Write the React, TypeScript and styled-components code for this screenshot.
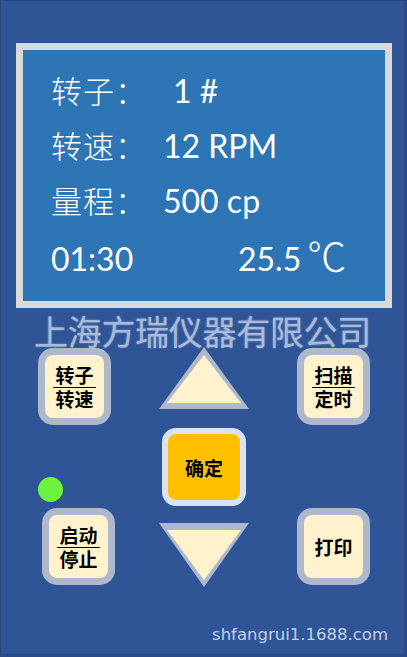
import React from "react";
import styled, { createGlobalStyle } from "styled-components";

const GlobalStyle = createGlobalStyle`
  html, body { margin: 0; padding: 0; }
  body { background: #2f5597; }
`;

const Panel = styled.div`
  box-sizing: border-box;
  width: 407px;
  height: 657px;
  background: #2f5597;
  border-left: 1px solid #264780;
  border-top: 1px solid #264780;
  border-right: 3px solid #294a84;
  border-bottom: 3px solid #294a84;
  display: flex;
  flex-direction: column;
  overflow: hidden;
`;

const Screen = styled.div`
  box-sizing: border-box;
  margin: 42px 0 0 15px;
  width: 376px;
  height: 265px;
  border: 7px solid #d9d9d9;
  background: #2e75b6;
  padding: 12px 0 0 28px;
  color: #ffffff;
`;

const Row = styled.div`
  display: flex;
  align-items: baseline;
  height: 55px;
  line-height: 55px;
  white-space: pre;
`;

const Label = styled.span`
  flex: none;
  width: 112px;
  font-family: "Noto Sans CJK SC", sans-serif;
  font-weight: 300;
  font-size: 31px;
  letter-spacing: 1px;
`;

const Value = styled.span<{ $indent?: number; $width?: number }>`
  flex: none;
  font-family: Lato, "Liberation Sans", sans-serif;
  font-size: 32px;
  padding-left: ${(p) => p.$indent ?? 0}px;
  width: ${(p) => (p.$width ? `${p.$width}px` : "auto")};
`;

const Degree = styled.span`
  font-family: "Noto Sans CJK SC", sans-serif;
  font-weight: 300;
  font-size: 39px;
  margin-left: 6px;
`;

const Company = styled.div`
  height: 39px;
  padding-top: 3px;
  box-sizing: border-box;
  line-height: 39px;
  text-align: center;
  font-family: "Noto Sans CJK SC", sans-serif;
  font-size: 34px;
  letter-spacing: -0.3px;
  color: #aab9d8;
  text-shadow: 0 0 2px rgba(200, 212, 236, 0.6);
  white-space: nowrap;
`;

const Keypad = styled.div`
  display: grid;
  grid-template-columns: 121px 138px 72px;
  grid-template-rows: 81px 80px 79px;
  margin-left: 37px;
`;

const Key = styled.div<{ $col: number; $row: number; $ml?: number; $mt?: number }>`
  grid-column: ${(p) => p.$col};
  grid-row: ${(p) => p.$row};
  box-sizing: border-box;
  width: 73px;
  height: 77px;
  margin: ${(p) => p.$mt ?? 0}px 0 0 ${(p) => p.$ml ?? 0}px;
  border: 7px solid #adb9ca;
  border-radius: 15px;
  background: #fff2cc;
  display: flex;
  align-items: center;
  justify-content: center;
  font-family: "Noto Sans CJK SC", sans-serif;
  font-weight: 700;
  font-size: 19px;
  color: #000000;
`;

const Fraction = styled.div`
  display: flex;
  flex-direction: column;
  align-items: center;
  line-height: 19px;
`;

const Numerator = styled.span`
  padding: 0 2px 3px;
  border-bottom: 1.5px solid #000000;
`;

const Denominator = styled.span`
  padding-top: 1px;
`;

const Enter = styled.div`
  grid-column: 2;
  grid-row: 2;
  align-self: start;
  box-sizing: border-box;
  width: 84px;
  height: 78px;
  margin-left: 3px;
  border: 6px solid #dae3f3;
  border-radius: 14px;
  background: #ffc000;
  display: flex;
  align-items: center;
  justify-content: center;
  font-family: "Noto Sans CJK SC", sans-serif;
  font-weight: 700;
  font-size: 19px;
  color: #000000;
`;

const Led = styled.div`
  grid-column: 1;
  grid-row: 2;
  align-self: end;
  width: 25px;
  height: 25px;
  margin: 0 0 6px 0;
  border-radius: 50%;
  background: #6ef43c;
`;

const TriangleBox = styled.div<{ $col: number; $row: number; $mt?: number }>`
  grid-column: ${(p) => p.$col};
  grid-row: ${(p) => p.$row};
  align-self: start;
  margin-top: ${(p) => p.$mt ?? 0}px;
  width: 90px;
  line-height: 0;
`;

const Footer = styled.div`
  margin-top: auto;
  padding: 0 16px 9px 0;
  text-align: right;
  font-family: "DejaVu Sans", sans-serif;
  font-size: 16.5px;
  line-height: 20px;
  color: #c3cfe8;
`;

function Triangle({ dir, col, row, mt }: { dir: "up" | "down"; col: number; row: number; mt?: number }) {
  const up = dir === "up";
  return (
    <TriangleBox $col={col} $row={row} $mt={mt}>
      <svg width="90" height={up ? 63 : 64} viewBox={up ? "0 0 90 63" : "0 0 90 64"}>
        {up ? (
          <>
            <polygon points="0,62 90,62 45,0" fill="#adb9ca" />
            <polygon points="8,56 82,56 45,8" fill="#fff2cc" />
          </>
        ) : (
          <>
            <polygon points="0,0 90,0 45,64" fill="#adb9ca" />
            <polygon points="8,7 82,7 45,57" fill="#fff2cc" />
          </>
        )}
      </svg>
    </TriangleBox>
  );
}

export default function App() {
  return (
    <>
      <GlobalStyle />
      <Panel>
        <Screen>
          <Row>
            <Label>转子：</Label>
            <Value $indent={10}>1 #</Value>
          </Row>
          <Row>
            <Label>转速：</Label>
            <Value>12 RPM</Value>
          </Row>
          <Row>
            <Label>量程：</Label>
            <Value>500 cp</Value>
          </Row>
          <Row>
            <Value $width={187}>01:30</Value>
            <Value>25.5</Value>
            <Degree>℃</Degree>
          </Row>
        </Screen>
        <Company>上海方瑞仪器有限公司</Company>
        <Keypad>
          <Key $col={1} $row={1} $mt={1}>
            <Fraction>
              <Numerator>转子</Numerator>
              <Denominator>转速</Denominator>
            </Fraction>
          </Key>
          <Triangle dir="up" col={2} row={1} />
          <Key $col={3} $row={1} $mt={1}>
            <Fraction>
              <Numerator>扫描</Numerator>
              <Denominator>定时</Denominator>
            </Fraction>
          </Key>
          <Led />
          <Enter>确定</Enter>
          <Key $col={1} $row={3} $ml={4}>
            <Fraction>
              <Numerator>启动</Numerator>
              <Denominator>停止</Denominator>
            </Fraction>
          </Key>
          <Triangle dir="down" col={2} row={3} mt={15} />
          <Key $col={3} $row={3}>打印</Key>
        </Keypad>
        <Footer>shfangrui1.1688.com</Footer>
      </Panel>
    </>
  );
}
